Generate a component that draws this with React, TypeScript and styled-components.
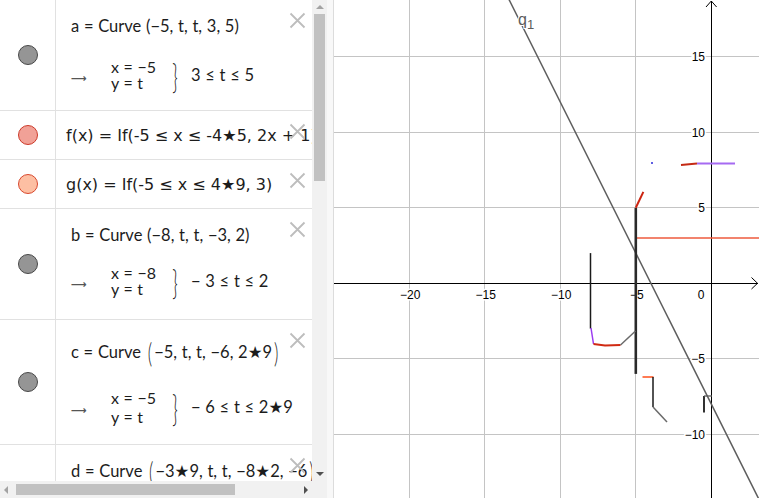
import React from 'react';
import styled, {createGlobalStyle} from 'styled-components';

const GlobalStyle = createGlobalStyle`
  html, body {
    margin: 0;
    padding: 0;
    background: #fff;
    overflow: hidden;
  }
  #root {
    width: 759px;
    height: 498px;
  }
`;

// graphics view: origin and pixels per unit
const OX = 711.3;
const OY = 283.3;
const S = 15.1;
const px = (u: number) => OX + S * u;
const py = (v: number) => OY - S * v;

interface CurveItem {
  name: string;
  args: string;
  big?: boolean;
  x: string;
  y: string;
  cond: string;
  height: number;
  top: number;
  gap: number;
}

interface FunctionItem {
  text: string;
  fill: string;
  stroke: string;
}

export default function App() {
  return (
    <>
      <GlobalStyle />
      <Frame>
        <AlgebraPanel>
          <RowList>
            <CurveRow item={{name: 'a', args: '−5, t, t, 3, 5', x: 'x = −5', y: 'y = t', cond: '3 ≤ t ≤ 5', height: 110, top: 15, gap: 18}} />
            <FunctionRow item={{text: 'f(x) = If(-5 ≤ x ≤ -4★5, 2x + 1)', fill: '#f1a197', stroke: '#cc3a2a'}} />
            <FunctionRow item={{text: 'g(x) = If(-5 ≤ x ≤ 4★9, 3)', fill: '#fdbfa3', stroke: '#d8482e'}} />
            <CurveRow item={{name: 'b', args: '−8, t, t, −3, 2', x: 'x = −8', y: 'y = t', cond: '− 3 ≤ t ≤ 2', height: 110, top: 15, gap: 15}} />
            <CurveRow item={{name: 'c', args: '−5, t, t, −6, 2★9', big: true, x: 'x = −5', y: 'y = t', cond: '− 6 ≤ t ≤ 2★9', height: 124, top: 18, gap: 20}} />
            <CurveRow item={{name: 'd', args: '−3★9, t, t, −8★2, −6', big: true, x: 'x = −3★9', y: 'y = t', cond: '− 8★2 ≤ t ≤ −6', height: 110, top: 12, gap: 20}} />
          </RowList>
          <VScroll>
            <Arrow $dir="up" />
            <VThumb />
            <Spacer />
            <Arrow $dir="down" />
          </VScroll>
          <HScroll>
            <Arrow $dir="left" />
            <HThumb />
            <Spacer />
            <Arrow $dir="right" />
          </HScroll>
          <Corner />
        </AlgebraPanel>
        <Splitter />
        <GraphicsPanel>
          <Graph />
        </GraphicsPanel>
      </Frame>
    </>
  );
}

const CurveRow = ({item}: {item: CurveItem}) => (
  <Row $h={item.height}>
    <MarkerCell>
      <Marker $fill="#959595" $stroke="#484848" />
    </MarkerCell>
    <CurveCell $top={item.top}>
      <CommandLine $tall={!!item.big}>
        {item.name} = Curve{' '}
        {item.big ? <BigParen>(</BigParen> : '('}
        {item.args}
        {item.big ? <BigParen>)</BigParen> : ')'}
      </CommandLine>
      <Parametric $gap={item.gap} $tall={!!item.big}>
        <MapsTo>⟶</MapsTo>
        <EqStack $tall={!!item.big}>
          <span>{item.x}</span>
          <span>{item.y}</span>
        </EqStack>
        <Brace $tall={!!item.big}>{'}'}</Brace>
        <Condition>{item.cond}</Condition>
      </Parametric>
      <CloseButton />
    </CurveCell>
  </Row>
);

const FunctionRow = ({item}: {item: FunctionItem}) => (
  <Row $h={48}>
    <MarkerCell>
      <Marker $fill={item.fill} $stroke={item.stroke} />
    </MarkerCell>
    <FunctionCell>
      {item.text}
      <CloseButton />
    </FunctionCell>
  </Row>
);

const CloseButton = () => (
  <Close>
    <svg width="17" height="17" viewBox="0 0 17 17">
      <path d="M1.5 1.5 L15.5 15.5 M15.5 1.5 L1.5 15.5" stroke="#bdbdbd" strokeWidth="1.8" fill="none" />
    </svg>
  </Close>
);

const Graph = () => {
  const gridX = [-25, -20, -15, -10, -5, 5];
  const gridY = [15, 10, 5, -5, -10];
  return (
    <svg width="425" height="498" viewBox="334 0 425 498">
      <g stroke="#c4c4c4" strokeWidth="1" shapeRendering="crispEdges">
        {gridX.map((u) => <line key={u} x1={px(u)} x2={px(u)} y1={0} y2={498} />)}
        {gridY.map((v) => <line key={v} x1={334} x2={759} y1={py(v)} y2={py(v)} />)}
      </g>
      <g fontFamily="'Liberation Sans', Arial, sans-serif" fontSize="12" fill="#000" stroke="#fff" strokeWidth="3" paintOrder="stroke">
        {[-20, -15, -10, -5].map((u) => (
          <text key={u} x={px(u) + 1} y={299} textAnchor="middle">{'−' + Math.abs(u)}</text>
        ))}
        <text x={704.5} y={299} textAnchor="end">0</text>
        {gridY.map((v) => (
          <text key={v} x={705} y={py(v) + 4.5} textAnchor="end">{v < 0 ? '−' + Math.abs(v) : v}</text>
        ))}
      </g>
      <g stroke="#000" strokeWidth="1" fill="none">
        <line x1={334} x2={758} y1={OY} y2={OY} shapeRendering="crispEdges" />
        <line x1={OX} x2={OX} y1={1} y2={498} shapeRendering="crispEdges" />
        <polyline points={`751.5,277.5 757.5,${OY} 751.5,289`} />
        <polyline points={`706,7 ${OX},1 716.6,7`} />
      </g>
      {/* q1: y = -2x - 8 */}
      <line x1={px(-13.5)} y1={py(19)} x2={px(3.7)} y2={py(-15.4)} stroke="#5c5c5c" strokeWidth="1.5" />
      <text x={518} y={25} fontFamily="'Liberation Sans', Arial, sans-serif" fontSize="16" fill="#5c5c5c" stroke="#fff" strokeWidth="2" paintOrder="stroke">
        q<tspan fontSize="13" dy="4">1</tspan>
      </text>
      {/* g(x) = 3 */}
      <line x1={px(-5)} y1={py(3)} x2={760} y2={py(3)} stroke="#ee5a3c" strokeWidth="1.6" />
      {/* a and c */}
      <line x1={px(-5)} y1={py(5)} x2={px(-5)} y2={py(-6)} stroke="#2a2a2a" strokeWidth="2.6" />
      {/* f(x) */}
      <line x1={px(-5)} y1={py(5)} x2={px(-4.5)} y2={py(6.05)} stroke="#cc2410" strokeWidth="2" />
      {/* b */}
      <line x1={px(-8)} y1={py(2)} x2={px(-8)} y2={py(-3)} stroke="#1a1a1a" strokeWidth="1.5" />
      <line x1={591} y1={328} x2={593.5} y2={344} stroke="#9b3cf0" strokeWidth="1.5" />
      <polyline points="593.5,344 605,345.5 620.5,345" stroke="#d02a12" strokeWidth="1.8" fill="none" />
      <line x1={620.5} y1={345} x2={635.5} y2={331} stroke="#6a6a6a" strokeWidth="1.5" />
      <line x1={642.5} y1={377} x2={653.5} y2={377} stroke="#ff5a28" strokeWidth="1.6" />
      <line x1={653} y1={377} x2={653} y2={407} stroke="#1a1a1a" strokeWidth="1.5" />
      <line x1={653} y1={407} x2={667} y2={422} stroke="#6a6a6a" strokeWidth="1.5" />
      <line x1={704} y1={396} x2={704} y2={412.5} stroke="#1a1a1a" strokeWidth="1.8" />
      <line x1={704} y1={396} x2={712} y2={396} stroke="#5a5a5a" strokeWidth="1.3" />
      <circle cx={652} cy={163} r={1} fill="#2a2ad8" />
      <line x1={681} y1={165} x2={697} y2={163.5} stroke="#c42a14" strokeWidth="1.8" />
      <line x1={697} y1={163.5} x2={735} y2={163.5} stroke="#a66af2" strokeWidth="1.8" />
    </svg>
  );
};

const Frame = styled.div`
  display: flex;
  width: 759px;
  height: 498px;
  overflow: hidden;
  background: #fff;
`;

const AlgebraPanel = styled.div`
  display: grid;
  grid-template-columns: 312px 15px;
  grid-template-rows: 481px 17px;
  width: 327px;
  flex-shrink: 0;
`;

const RowList = styled.div`
  display: flex;
  flex-direction: column;
  overflow: hidden;
  background: #fff;
`;

const Row = styled.div<{$h: number}>`
  display: grid;
  grid-template-columns: 56px 1fr;
  height: ${(p) => p.$h}px;
  flex-shrink: 0;
  border-bottom: 1px solid #e1e1e1;
`;

const MarkerCell = styled.div`
  display: flex;
  align-items: center;
  justify-content: center;
  border-right: 1px solid #e1e1e1;
`;

const Marker = styled.div<{$fill: string; $stroke: string}>`
  width: 18px;
  height: 18px;
  border-radius: 50%;
  background: ${(p) => p.$fill};
  border: 1px solid ${(p) => p.$stroke};
`;

const CurveCell = styled.div<{$top: number}>`
  position: relative;
  display: flex;
  flex-direction: column;
  padding: ${(p) => p.$top}px 0 0 15px;
  overflow: hidden;
  white-space: nowrap;
  font-family: Lato, 'DejaVu Sans', sans-serif;
  font-size: 16.5px;
  word-spacing: 0.5px;
  color: #1c1c1c;
`;

const CommandLine = styled.div<{$tall: boolean}>`
  display: flex;
  align-items: center;
  height: ${(p) => (p.$tall ? 28 : 22)}px;
  white-space: pre;
`;

const BigParen = styled.span`
  display: inline-block;
  font-weight: 300;
  font-size: 17px;
  transform: scaleY(1.6);
  margin: 0 2px;
`;

const Parametric = styled.div<{$gap: number; $tall: boolean}>`
  display: flex;
  align-items: center;
  height: ${(p) => (p.$tall ? 42 : 40)}px;
  margin-top: ${(p) => p.$gap}px;
`;

const MapsTo = styled.span`
  width: 40px;
  font-family: 'DejaVu Sans', sans-serif;
  font-size: 11px;
  font-weight: bold;
  color: #555;
  padding-top: 7px;
`;

const EqStack = styled.div<{$tall: boolean}>`
  display: flex;
  flex-direction: column;
  width: 60px;
  font-size: 16px;
  line-height: ${(p) => (p.$tall ? 19 : 16)}px;
`;

const Brace = styled.span<{$tall: boolean}>`
  display: inline-block;
  width: 14px;
  margin-left: 2px;
  font-weight: 300;
  font-size: 17px;
  transform: scale(1.1, ${(p) => (p.$tall ? 2.1 : 2)});
`;

const Condition = styled.span`
  margin-left: 4px;
`;

const FunctionCell = styled.div`
  position: relative;
  display: flex;
  align-items: center;
  padding-left: 10px;
  overflow: hidden;
  white-space: nowrap;
  font-family: 'DejaVu Sans', sans-serif;
  font-size: 16px;
  color: #1c1c1c;
`;

const Close = styled.div`
  position: absolute;
  top: 12px;
  right: 6px;
  width: 17px;
  height: 17px;
  background: transparent;
`;

const VScroll = styled.div`
  display: flex;
  flex-direction: column;
  align-items: center;
  background: #f1f1f1;
`;

const HScroll = styled.div`
  display: flex;
  align-items: center;
  background: #f1f1f1;
`;

const Spacer = styled.div`
  flex: 1;
`;

const VThumb = styled.div`
  width: 11px;
  height: 167px;
  background: #c1c1c1;
`;

const HThumb = styled.div`
  width: 219px;
  height: 11px;
  background: #c1c1c1;
  margin-left: 4px;
`;

const Corner = styled.div`
  background: #f1f1f1;
`;

const Arrow = styled.div<{$dir: 'up' | 'down' | 'left' | 'right'}>`
  flex-shrink: 0;
  width: 0;
  height: 0;
  margin: ${(p) => (p.$dir === 'up' || p.$dir === 'down' ? '5px 0' : '0 4px')};
  border: 4px solid transparent;
  ${(p) => p.$dir === 'up' && 'border-bottom: 4px solid #a3a3a3; border-top-width: 0;'}
  ${(p) => p.$dir === 'down' && 'border-top: 4px solid #505050; border-bottom-width: 0;'}
  ${(p) => p.$dir === 'left' && 'border-right: 4px solid #a3a3a3; border-left-width: 0;'}
  ${(p) => p.$dir === 'right' && 'border-left: 4px solid #505050; border-right-width: 0;'}
`;

const Splitter = styled.div`
  width: 6px;
  flex-shrink: 0;
  background: #f8f8f8;
  border-right: 1px solid #dcdcdc;
`;

const GraphicsPanel = styled.div`
  flex: 1;
  display: flex;
  overflow: hidden;
`;
